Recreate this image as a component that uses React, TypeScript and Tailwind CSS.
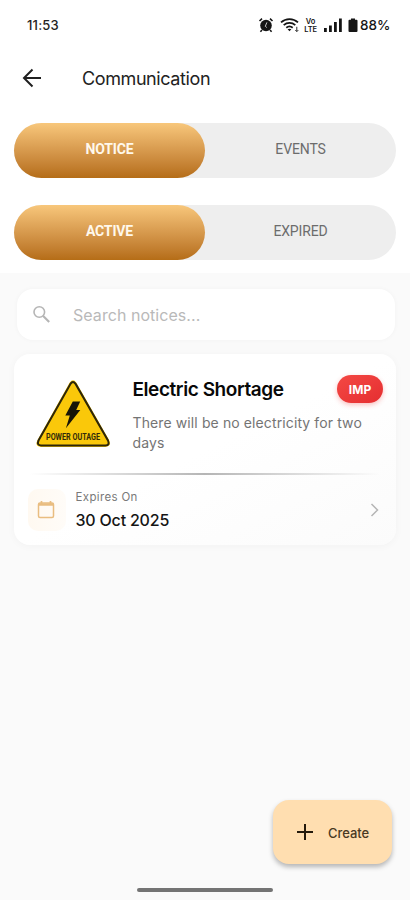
import React from "react";

function StatusBar() {
  return (
    <div className="flex h-[50px] items-center justify-between pl-[27px] pr-[20px]">
      <span className="text-[13px] font-medium leading-4 tracking-[0.2px] text-[#222]">11:53</span>
      <div className="flex items-center text-[#151515]">
        <svg width="16" height="16" viewBox="0 0 16 16" className="mr-[6px]">
          <circle cx="8" cy="8.5" r="5.8" fill="currentColor" />
          <path d="M1.5 4 4 1.7M14.5 4 12 1.7M4 13l-1.6 1.7M12 13l1.6 1.7" stroke="currentColor" strokeWidth="1.6" />
          <path d="M8.900 5.400 7.300 9.300l1.500 1.200" stroke="#ddd" strokeWidth=".9" fill="none" />
        </svg>
        <svg width="20" height="16" viewBox="0 0 20 16" className="mr-[4px]" fill="none" stroke="currentColor">
          <path d="M1 5.400C5.800 1 13.200 1 18 5.400M3.700 8.200c3.400-3 8.200-3 11.600 0M6.300 10.800c2-1.700 4.400-1.700 6.400 0" strokeWidth="1.800" />
          <path d="m7.600 12.300 1.900 2 1.900-2c-1.100-.9-2.700-.9-3.800 0Z" fill="currentColor" stroke="none" />
          <path d="M16.800 9.800v4.600m-1.500-1.300 1.500 1.500 1.500-1.500" strokeWidth=".9" />
        </svg>
        <div className="mr-[7px] flex w-[13px] flex-col items-center pt-px text-[7.500px] font-semibold">
          <span className="leading-[8px]">Vo</span>
          <span className="leading-[8px] tracking-[-0.200px]">LTE</span>
        </div>
        <svg width="18" height="15" viewBox="0 0 18 15" className="mr-[6px]" fill="currentColor">
          <path d="M0 10h2.800v4H0zM5 7.500h2.800V14H5zM10 4h2.800v10H10zM15 .5h2.800V14H15z" />
        </svg>
        <svg width="10" height="15" viewBox="0 0 10 15" className="mr-[2px]" fill="currentColor">
          <path d="M3 .5h4v1.300h1.500q1 0 1 1V13q0 1-1 1h-7q-1 0-1-1V2.800q0-1 1-1H3z" />
        </svg>
        <span className="w-[30px] whitespace-nowrap text-[13.500px] font-medium leading-4">88%</span>
      </div>
    </div>
  );
}

function Segments({ active, other }: { active: string; other: string }) {
  return (
    <div className="flex h-[55px] rounded-full bg-[#eee] font-[Roboto,sans-serif] text-[14px] tracking-[-0.150px]">
      <div className="flex flex-1 items-center justify-center rounded-full bg-linear-to-b from-[#f8c77b] to-[#b56d16] pb-[3px] font-bold text-[#fff8ec]">
        {active}
      </div>
      <div className="flex flex-1 items-center justify-center pb-[3px] text-[#6c6c6c]">{other}</div>
    </div>
  );
}

function OutageSign() {
  return (
    <svg width="76" height="70" viewBox="0 0 76 70" className="shrink-0">
      <path d="M34.600 3.700Q38 -1 41.400 3.700L74.300 61.500Q76.800 67.500 70 68H6Q-.3 67.500 2.300 61.500Z" fill="#fac80a" />
      <path d="M35.400 4.900Q38 1 40.600 4.900L73 61.500Q75 66.500 70.500 66.500H6Q1.500 66.300 3.500 61.500Z" fill="none" stroke="#2d2609" strokeWidth="2" />
      <path d="M37.800 22.500h7.400l-4 8.500h4.100L30.900 49.300l3.900-12.700h-4.500z" fill="#171407" />
      <text x="38" y="61.300" textAnchor="middle" textLength="54" lengthAdjust="spacingAndGlyphs" fontFamily="Roboto, sans-serif" fontWeight="700" fontSize="8.500" fill="#332b09">
        POWER OUTAGE
      </text>
    </svg>
  );
}

export default function App() {
  return (
    <div className="relative flex h-[900px] w-[410px] flex-col overflow-hidden bg-[#fafafa] font-[Inter,sans-serif]">
      <header className="h-[273px] bg-white">
        <StatusBar />
        <div className="flex h-[56px] items-center pl-[22px]">
          <svg width="21" height="20" viewBox="0 0 21 20" fill="none" stroke="#202020" strokeWidth="2">
            <path d="M19 10H2.500M10.500 1.500 2 10l8.500 8.500" />
          </svg>
          <h1 className="ml-[39px] whitespace-nowrap pt-[2px] text-[18px] leading-6 tracking-[-0.400px] text-[#222]">Communication</h1>
        </div>
        <div className="flex flex-col gap-[27px] px-[14px] pt-[17px]">
          <Segments active="NOTICE" other="EVENTS" />
          <Segments active="ACTIVE" other="EXPIRED" />
        </div>
      </header>

      <main className="px-[14px] pt-[16px]">
        <div className="ml-[3px] mr-[1px] flex h-[51px] items-center rounded-[16px] bg-white pl-[15px] shadow-[0_0_5px_rgba(0,0,0,0.035)]">
          <svg width="19" height="19" viewBox="0 0 19 19" fill="none" stroke="#b5b5b5">
            <circle cx="7.300" cy="7" r="5.300" strokeWidth="1.600" />
            <path d="m11.200 11 6 6" strokeWidth="2.100" />
          </svg>
          <span className="ml-[22px] whitespace-nowrap text-[16px] leading-5 tracking-[0.050px] text-[#b9b9b9]">Search notices...</span>
        </div>

        <article className="mt-[14px] h-[191px] rounded-[16px] bg-linear-to-br from-white from-50% to-[#fbfbfb] px-[14px] shadow-[0_1px_8px_rgba(0,0,0,0.035)]">
          <div className="flex h-[119px] pl-[7px]">
            <div className="mt-[25px]">
              <OutageSign />
            </div>
            <div className="ml-[21.500px] min-w-0 flex-1 pt-[21px]">
              <div className="flex h-[28px] items-center justify-between">
                <h2 className="whitespace-nowrap pt-[2px] text-[19px] font-semibold leading-7 tracking-[-0.430px] text-[#080808]">Electric Shortage</h2>
                <span className="mr-[-1px] flex h-[28px] w-[46px] items-center justify-center rounded-full bg-linear-to-br from-[#f44844] to-[#e52d30] pt-px text-[12px] font-bold tracking-[0.100px] text-white shadow-[0_2px_5px_rgba(240,50,45,0.300)]">
                  IMP
                </span>
              </div>
              <p className="mt-[10px] text-[14px] leading-[20px] tracking-[0.110px] text-[#747474]">
                There will be no electricity for two
                <br />
                days
              </p>
            </div>
          </div>
          <div className="mx-[2px] h-[1.500px] bg-linear-to-r from-transparent via-[#b5b5b5] to-transparent" />
          <div className="flex items-center pt-[13px]">
            <div className="flex h-[42px] w-[38px] items-center justify-center rounded-[10px] bg-linear-to-r from-[#fff9f1] to-[#fffcf8]">
              <svg width="18" height="20" viewBox="0 0 18 20" fill="none" stroke="#e9bd80" strokeWidth="1.500" className="mr-[2px] mt-px">
                <rect x="1.500" y="3" width="15" height="14.500" rx="1.500" />
                <path d="M1.500 4.500h15" strokeWidth="2.500" />
                <path d="M4.500 1v3M13.500 1v3" strokeWidth="1.700" />
              </svg>
            </div>
            <div className="ml-[9.500px] flex-1">
              <div className="text-[11.500px] leading-[18px] tracking-[0.350px] text-[#797979]">Expires On</div>
              <div className="mt-[2px] whitespace-nowrap text-[16px] font-medium leading-[24px] tracking-[-0.200px] text-[#151515]">30 Oct 2025</div>
            </div>
            <svg width="10" height="14" viewBox="0 0 10 14" fill="none" stroke="#b5b5b5" strokeWidth="1.500" className="mr-[2px]">
              <path d="m1.500 1 6 6-6 6" />
            </svg>
          </div>
        </article>
      </main>

      <button className="absolute bottom-[36px] right-[18px] flex h-[64px] w-[119px] items-center rounded-[16px] bg-[#ffdeb0] pl-[24px] shadow-[0_3px_5px_rgba(0,0,0,0.280)]">
        <svg width="16" height="16" viewBox="0 0 16 16" stroke="#251a0c" strokeWidth="2">
          <path d="M8 0v16M0 8h16" />
        </svg>
        <span className="ml-[15px] pt-[2px] text-[13px] font-medium leading-5 tracking-[-0.050px] text-[#493923]">Create</span>
      </button>
      <div className="absolute bottom-[8px] left-[137px] h-[4px] w-[136px] rounded-full bg-[#747474]" />
    </div>
  );
}
